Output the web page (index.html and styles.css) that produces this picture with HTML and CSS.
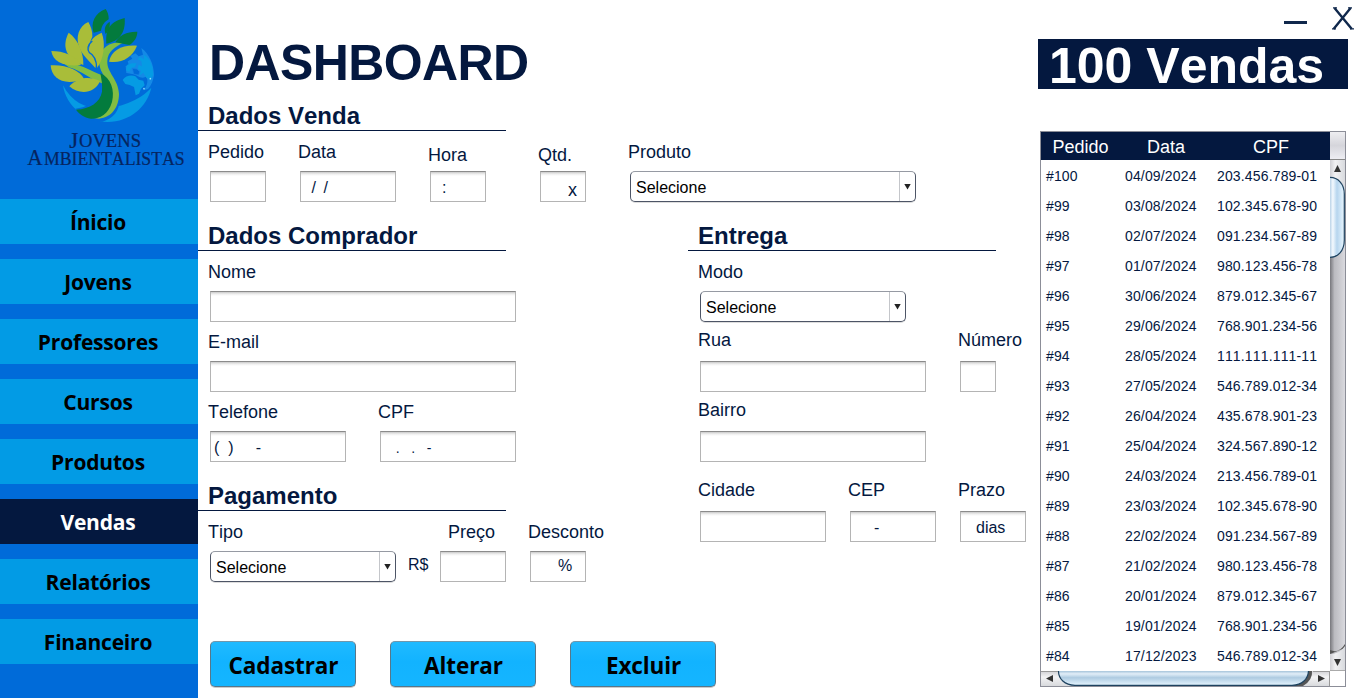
FILE: index.html
```html
<!DOCTYPE html>
<html lang="pt-BR">
<head>
<meta charset="utf-8">
<title>Dashboard - Vendas</title>
<link rel="stylesheet" href="styles.css">
</head>
<body>
<div class="app">
  <aside class="sidebar">
    <svg class="logo" viewBox="0 0 594 597" aria-label="Jovens Ambientalistas">
      <path fill="#059be4" d="M189 256C215 305 255 325 300 326C354 325 420 302 454 263C441 321 390 365 323 366C258 365 198 320 189 256Z"/>
      <path fill="#1489e6" d="M424 144C447 161 462 193 462 226C459 244 454 257 444 267L431 271C443 255 446 238 437 230C423 240 411 224 397 222L379 219L377 198L386 194L383 184L397 176L391 168L406 160L416 169L429 164Z"/>
      <path fill="#059be4" d="M431 164C449 173 460 195 460 225L451 241L438 232L430 218L417 228L423 212L413 207L416 194L426 199L424 183L413 178L420 171L432 178Z"/>
      <path fill="#059be4" d="M382 194L397 190L410 190L404 201L395 203L387 216L378 211Z"/>
      <path fill="#059be4" d="M368 240C376 227 394 224 406 229L416 239L430 242L434 256L423 266L417 281L407 286L402 261L389 255L376 252Z"/>
      <path fill="#006bd9" stroke="#1781e4" stroke-width="2" d="M397 205L411 207L419 215L416 225L401 222Z"/>
      <circle cx="451" cy="236" r="2.5" fill="#8edcff"/><circle cx="432" cy="266" r="2.5" fill="#8edcff"/>
      <path fill="#006bd9" d="M226 326C270 321 299 298 303 245L334 238L358 300C359 332 340 356 307 365L272 361Z"/>
      <path fill="#82bd42" d="M368 129C340 122 306 138 299 170C293 204 308 220 321 240C341 280 335 325 281 354L297 356C337 353 357 319 357 282C355 237 320 218 322 184C323 153 345 142 368 129Z"/>
      <path fill="#82bd42" d="M184 185C232 187 273 212 306 226L311 252C276 242 244 211 207 202Z"/>
      <path fill="#037b3d" d="M301 219C333 235 345 270 336 306C325 344 297 357 273 356C251 352 239 343 228 329C271 326 300 307 306 275C308 253 304 237 301 219Z"/>
      <g fill="#a9bd39">
        <path d="M206 98C189 130 188 172 250 195C251 160 235 118 206 98Z"/>
        <path d="M265 66C236 78 226 112 238 142C246 166 267 182 286 204C293 187 286 167 268 157C263 142 268 130 277 110C278 93 272 79 265 66Z"/>
        <path d="M305 98C275 112 266 126 267 158C278 164 289 175 291 204C311 178 318 130 305 98Z"/>
        <path d="M154 153C190 153 228 167 243 195C198 201 159 188 154 153Z"/>
        <path d="M152 196C198 193 238 210 252 236C196 260 154 238 152 196Z"/>
        <path d="M208 259C234 230 270 228 300 243C283 283 236 284 208 259Z"/>
        <path d="M327 185C334 151 365 134 411 137C397 173 364 191 327 185Z"/>
      </g>
      <path fill="none" stroke="#006bd9" stroke-width="4" d="M277 123C262 135 261 149 268 158C280 164 289 179 290 203"/>
      <g fill="#037b3d">
        <path d="M317 27C284 38 271 70 281 98L303 92C306 75 314 65 326 58C327 45 322 34 317 27Z"/>
        <path d="M374 54C334 64 315 84 319 131C354 124 378 102 374 54Z"/>
        <path d="M329 65C315 74 311 88 317 102C327 92 331 76 329 65Z"/>
        <path d="M412 95C382 94 357 105 346 127L388 135C402 126 412 112 412 95Z"/>
      </g>
      <text class="logo-text cap" x="208" y="444" textLength="27" lengthAdjust="spacingAndGlyphs">J</text>
      <text class="logo-text" x="237" y="440" textLength="186" lengthAdjust="spacingAndGlyphs">OVENS</text>
      <text class="logo-text cap" x="82" y="494" textLength="46" lengthAdjust="spacingAndGlyphs">A</text>
      <text class="logo-text" x="132" y="494" textLength="422" lengthAdjust="spacingAndGlyphs">MBIENTALISTAS</text>
    </svg>
    <nav class="menu">
      <a class="menu-item">Ínicio</a>
      <a class="menu-item">Jovens</a>
      <a class="menu-item">Professores</a>
      <a class="menu-item">Cursos</a>
      <a class="menu-item">Produtos</a>
      <a class="menu-item active">Vendas</a>
      <a class="menu-item">Relatórios</a>
      <a class="menu-item">Financeiro</a>
    </nav>
  </aside>

  <main class="form">
    <h1>DASHBOARD</h1>
    <h2>Dados Venda</h2>
    <div class="row sale-row">
      <label class="field w56"><span>Pedido</span><input></label>
      <label class="field w96"><span>Data</span><input class="date" value="  /  /"></label>
      <label class="field w56 near"><span>Hora</span><input class="time" value=":"></label>
      <label class="field w46 near"><span>Qtd.</span><input class="qty" value="x"></label>
      <div class="field w286"><span>Produto</span><div class="select"><b>Selecione</b><i></i></div></div>
    </div>
    <div class="columns">
      <section class="buyer">
        <h2>Dados Comprador</h2>
        <div class="row"><label class="field w306"><span>Nome</span><input></label></div>
        <div class="row"><label class="field w306"><span>E-mail</span><input></label></div>
        <div class="row gap34">
          <label class="field w136"><span>Telefone</span><input value="(  )     -"></label>
          <label class="field w136"><span>CPF</span><input class="cpf" value="   .   .   -"></label>
        </div>
        <h2 class="payment-title">Pagamento</h2>
        <div class="row">
          <div class="field w186"><span>Tipo</span><div class="select"><b>Selecione</b><i></i></div></div>
          <span class="currency">R$</span>
          <label class="field w66 price"><span>Preço</span><input></label>
          <label class="field w56 discount"><span>Desconto</span><input class="percent" value="%"></label>
        </div>
      </section>
      <section class="delivery">
        <h2>Entrega</h2>
        <div class="row"><div class="field w206"><span>Modo</span><div class="select"><b>Selecione</b><i></i></div></div></div>
        <div class="row gap34">
          <label class="field w226 far"><span>Rua</span><input></label>
          <label class="field w36 far"><span>Número</span><input></label>
        </div>
        <div class="row"><label class="field w226 far"><span>Bairro</span><input></label></div>
        <div class="row gap24 city">
          <label class="field w126 far"><span>Cidade</span><input></label>
          <label class="field w86 far"><span>CEP</span><input class="cep" value="-"></label>
          <label class="field w66 far"><span>Prazo</span><input class="days" value="dias"></label>
        </div>
      </section>
    </div>
    <div class="actions">
      <button>Cadastrar</button>
      <button>Alterar</button>
      <button>Excluir</button>
    </div>
  </main>

  <aside class="sales">
    <div class="window-controls">
      <span class="minimize"></span>
      <svg class="close" viewBox="0 0 22 24"><path fill="none" stroke="#10284c" stroke-width="2.4" d="M2.5 1L19.8 22M18.6 1L1.6 22"/><path stroke="#10284c" stroke-width="1.2" d="M1 .8H5M16 .8H20M0 21.8H4M18 21.8H22"/></svg>
    </div>
    <div class="total">100 Vendas</div>
    <div class="list">
      <div class="thead"><span>Pedido</span><span>Data</span><span>CPF</span></div>
      <div class="corner"></div>
      <div class="tbody" id="rows"></div>
      <svg class="vbar" viewBox="0 0 15 511">
        <defs>
          <linearGradient id="track"><stop offset="0" stop-color="#77777c"/><stop offset=".3" stop-color="#bbbbc0"/><stop offset="1" stop-color="#d9d9de"/></linearGradient>
          <linearGradient id="thumb"><stop offset="0" stop-color="#a6c5df"/><stop offset=".25" stop-color="#f3f9fe"/><stop offset=".52" stop-color="#b6d5ee"/><stop offset="1" stop-color="#eaf7ff"/></linearGradient>
          <linearGradient id="cap"><stop offset="0" stop-color="#cfcfd4"/><stop offset=".35" stop-color="#f1f1f3"/><stop offset="1" stop-color="#d8dade"/></linearGradient>
        </defs>
        <path fill="url(#track)" d="M0 0H15V511H0Z"/>
        <path fill="url(#cap)" d="M0 0H15V27Q10 17 0 17Z"/>
        <path fill="#333" d="M7.5 5L11 12H4Z"/>
        <path fill="url(#thumb)" stroke="#1e4360" stroke-width="1.2" d="M-1 17.5C8 17 14.3 24 14.3 34V80C14.3 91 8 97.5 -1 97.5Z"/>
        <path fill="#555" d="M0 490Q9 494 15 484V488L0 494Z"/>
        <path fill="url(#cap)" d="M0 494Q10 494 15 486V510H0Z"/>
        <path fill="#333" d="M4 499H11L7.5 506Z"/>
        <path stroke="#aaa" d="M0 510.5H15"/>
      </svg>
      <svg class="hbar" viewBox="0 0 289 15">
        <defs>
          <linearGradient id="hthumb" x2="0" y2="1"><stop offset="0" stop-color="#90b4cf"/><stop offset=".25" stop-color="#e2eef8"/><stop offset=".5" stop-color="#aecbe1"/><stop offset="1" stop-color="#e5f5ff"/></linearGradient>
          <linearGradient id="hcap" x2="0" y2="1"><stop offset="0" stop-color="#d0d0d4"/><stop offset=".4" stop-color="#f3f3f4"/><stop offset="1" stop-color="#d8dadd"/></linearGradient>
        </defs>
        <path fill="url(#hcap)" d="M0 0H289V15H0Z"/>
        <path fill="#555" d="M264 0H271Q272 9 262 15H250Z"/>
        <path fill="url(#hthumb)" stroke="#1e4360" stroke-width="1.2" d="M17.5 -1C17 8 24 14.3 34 14.3H251C261 14.3 267.5 8 267.5 -1Z"/>
        <path fill="#333" d="M5 7.5L12 4V11ZM284 7.5L277 4V11Z"/>
        <path stroke="#999" d="M0 .5H17M272 .5H289M288.5 0V15"/>
      </svg>
    </div>
  </aside>
</div>
<script src="sales.js"></script>
</body>
</html>
```

FILE: sales.js
```js
const sales = [
  ["04/09/2024", "203.456.789-01"],
  ["03/08/2024", "102.345.678-90"],
  ["02/07/2024", "091.234.567-89"],
  ["01/07/2024", "980.123.456-78"],
  ["30/06/2024", "879.012.345-67"],
  ["29/06/2024", "768.901.234-56"],
  ["28/05/2024", "111.111.111-11"],
  ["27/05/2024", "546.789.012-34"],
  ["26/04/2024", "435.678.901-23"],
  ["25/04/2024", "324.567.890-12"],
  ["24/03/2024", "213.456.789-01"],
  ["23/03/2024", "102.345.678-90"],
  ["22/02/2024", "091.234.567-89"],
  ["21/02/2024", "980.123.456-78"],
  ["20/01/2024", "879.012.345-67"],
  ["19/01/2024", "768.901.234-56"],
  ["17/12/2023", "546.789.012-34"]
];
document.getElementById("rows").innerHTML = sales
  .map(([date, cpf], i) => `<div class="tr"><span>#${100 - i}</span><span>${date}</span><span>${cpf}</span></div>`)
  .join("");
```

FILE: styles.css
```css
* { box-sizing: border-box; font-kerning: none; }
body { margin: 0; background: #fff; color: #04183f; font-family: "Liberation Sans", Arial, sans-serif; overflow: hidden; }
.app { display: grid; grid-template-columns: 198px 840px 316px; height: 698px; }

.sidebar { background: #006bd9; }
.logo { display: block; width: 198px; height: 199px; }
.logo-text { font-family: "Liberation Serif", serif; font-size: 56px; fill: #06245f; stroke: #06245f; stroke-width: .7px; }
.logo-text.cap { font-size: 72px; }
.menu { display: flex; flex-direction: column; gap: 15px; }
.menu-item { height: 45px; text-align: center; padding-right: 2px; background: #029be5; color: #000; font: 700 21px/46px "Open Sans", sans-serif; letter-spacing: -.2px; font-kerning: none; }
.menu-item.active { background: #04183f; color: #fff; }

.form { padding-top: 35px; }
h1 { margin: 0 0 11px 11px; font-size: 50px; line-height: 57px; letter-spacing: -.6px; }
h2 { margin: 0; width: 308px; height: 28px; padding-left: 10px; border-bottom: 1px solid #04183f; font-size: 24px; line-height: 26px; }
.row { display: flex; padding: 10px 0 0 12px; }
h2 + .row { padding-top: 11px; }
.gap34 { gap: 34px; }
.gap24 { gap: 24px; }
.sale-row .field:nth-child(2) { margin-left: 34px; }
.sale-row .field:nth-child(3) { margin-left: 34px; }
.sale-row .field:nth-child(4) { margin-left: 54px; }
.sale-row .field:nth-child(5) { margin-left: 44px; }
.field { display: flex; flex-direction: column; }
.field > span { height: 29px; margin-left: -2px; font-size: 18px; line-height: 20px; white-space: nowrap; }
.near > span { padding-top: 3px; }
.far > span { height: 31px; }
.w36 { width: 36px; } .w46 { width: 46px; } .w56 { width: 56px; } .w66 { width: 66px; }
.w86 { width: 86px; } .w96 { width: 96px; } .w126 { width: 126px; } .w136 { width: 136px; }
.w186 { width: 186px; } .w206 { width: 206px; } .w226 { width: 226px; } .w286 { width: 286px; } .w306 { width: 306px; }
input { width: 100%; height: 31px; margin: 0; padding: 2px 3px 0; border: 1px solid #b4b4b4; border-top-color: #8b8b8b; border-radius: 0; background: linear-gradient(#c9c9c9, #eee 2px, #fff 4px); color: #04183f; font: 16px "Liberation Sans", Arial, sans-serif; }
.date { word-spacing: -.7px; }
.time { padding-left: 11px; }
.qty { padding: 7px 0 0 27px; font-size: 18px; }
.cpf { font-size: 14px; }
.cep { padding-left: 23px; }
.days { padding-left: 15px; }
.percent { padding: 0 0 2px 27px; }
.select { display: flex; height: 31px; border: 1px solid #4d5566; border-top-color: #969aa3; border-radius: 5px; box-shadow: 0 1px #ddd; color: #000; }
.select b { flex: 1; padding: 6px 0 0 5px; font: 16px/19px "Liberation Sans", Arial, sans-serif; }
.select i { width: 16px; border-left: 1px solid #c4c6ca; display: flex; align-items: center; justify-content: center; }
.select i::after { content: ""; width: 7px; height: 6px; background: #222; clip-path: polygon(0 0, 100% 0, 50% 100%); }
.columns { display: grid; grid-template-columns: 490px 350px; margin-top: 21px; }
.sale-row, .columns .row { align-items: flex-start; }
.sale-row { height: 71px; }
.buyer > .row { height: 70px; }
.buyer h2 + .row { height: 71px; }
.payment-title { margin-top: 21px; }
.currency { width: 44px; padding: 33px 0 0 12px; font-size: 16px; line-height: 20px; }
.price > span { margin-left: 8px; }
.discount { margin-left: 24px; }
.delivery > .row { height: 70px; padding-top: 8px; }
.delivery h2 + .row { height: 71px; padding-top: 11px; }
.delivery .city { height: 80px; padding-top: 18px; }
.actions { display: flex; gap: 34px; margin: 59px 0 0 12px; }
.actions button { width: 146px; height: 46px; padding: 3px 0 0 1px; border: 1px solid #58778a; border-top-color: #7297ab; border-radius: 5px; background: linear-gradient(#20baff, #12b3ff 45%, #15b5ff); box-shadow: 0 1px #ccc; color: #000; font: 700 22.5px "Open Sans", sans-serif; letter-spacing: -.1px; }

.window-controls { display: flex; height: 39px; padding: 7px 0 0 246px; }
.minimize { width: 23px; height: 3px; margin: 14px 25px 0 0; background: #10284c; }
.close { width: 22px; height: 24px; }
.total { width: 310px; height: 50px; padding-left: 11px; background: #04183f; color: #fff; font-weight: 700; font-size: 50px; line-height: 55px; white-space: nowrap; }
.list { display: grid; grid-template-columns: 289px 15px; grid-template-rows: 28px 511px 15px; width: 306px; height: 556px; margin: 42px 0 0 2px; border: 1px solid #8c8e98; }
.thead, .tr { display: grid; grid-template-columns: 79px 92px 118px; }
.thead { background: #04183f; color: #fff; font-size: 18px; line-height: 31px; height: 28px; text-align: center; }
.corner { background: linear-gradient(#eeeef1, #d5d5db 50%, #eeeef3); border-bottom: 1px solid #888; }
.tbody { padding-top: 1px; overflow: hidden; }
.tr { height: 30px; font-size: 14px; line-height: 30px; letter-spacing: .15px; }
.tr span { padding-left: 5px; }
.vbar { width: 15px; height: 511px; }
.hbar { width: 289px; height: 15px; }
```
